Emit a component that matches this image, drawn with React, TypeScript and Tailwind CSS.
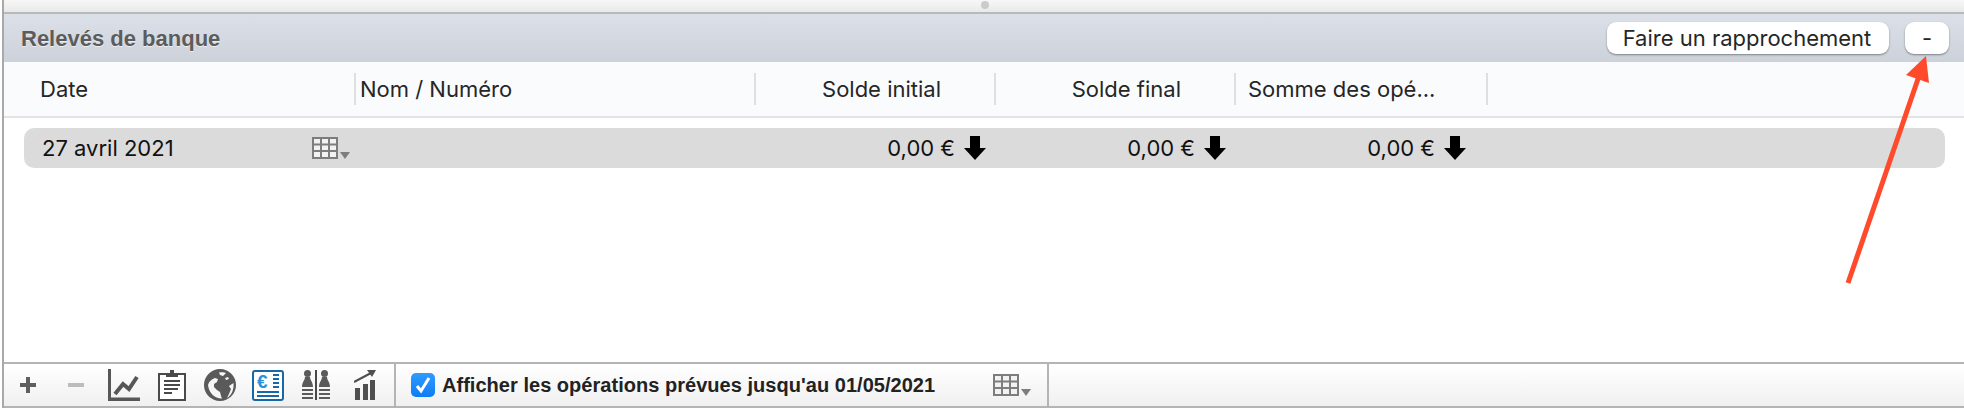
const sans = "font-['Inter','Liberation_Sans',sans-serif]"

function GridIcon () {
  return (
    <svg width="38" height="22" viewBox="0 0 38 22" className="shrink-0">
      <rect x="1" y="1" width="24" height="20" fill="#f2f2f2" stroke="#7d7d7d" strokeWidth="2" />
      <path d="M9 1v20M17 1v20M1 7.500h24M1 14h24" stroke="#7d7d7d" strokeWidth="2" fill="none" />
      <path d="M28 15h10l-5 7z" fill="#7d7d7d" />
    </svg>
  )
}

function DownArrow () {
  return (
    <svg width="22" height="24" viewBox="0 0 22 24" className="shrink-0">
      <path d="M6 0h10v12h6L11 24 0 12h6z" fill="#000" />
    </svg>
  )
}

function ChartIcon () {
  return (
    <svg width="32" height="32" viewBox="0 0 32 32" className="shrink-0">
      <path d="M0 0h3v28.500h29V32H0z" fill="#575757" />
      <path d="M7 25l8-10 6 5 8-12" stroke="#575757" strokeWidth="4" fill="none" />
    </svg>
  )
}

function ClipboardIcon () {
  return (
    <svg width="28" height="32" viewBox="0 0 28 32" className="shrink-0">
      <path d="M8 5H1v26h26V5h-7" stroke="#4a4a4a" strokeWidth="2" fill="#fff" />
      <path d="M8 8V4h4V1h4v3h4v4z" fill="#4a4a4a" />
      <path d="M6 12h16M6 16h16M6 20h14M6 24h8" stroke="#4a4a4a" strokeWidth="2" />
    </svg>
  )
}

function GlobeIcon () {
  return (
    <svg width="32" height="32" viewBox="0 0 32 32" className="shrink-0">
      <circle cx="16" cy="16" r="16" fill="#5a5a5a" />
      <path d="M4 16C5 12 8 10 11 9l3 1-1 3-3 2v3l3 3 3 2 1 4 1 2.500C12 30 5 25 4 16z" fill="#f6f6f6" />
      <path d="M23 29l2-4 2-5-2-3 4.500-3C30 20 28 26 23 29z" fill="#f6f6f6" />
      <path d="M15 3.500c3-.5 6 0 7 .5l-3 3-3-1zM21 9l3-1 1 2-3 1z" fill="#f6f6f6" />
    </svg>
  )
}

function EuroIcon () {
  return (
    <div className="flex h-[31px] w-[32px] shrink-0 flex-col rounded-[3px] border-2 border-[#1668a8] bg-white px-[3px] pt-[2px]">
      <div className="flex h-[15px] items-center gap-[2px]">
        <span className="w-[14px] font-['Liberation_Sans',sans-serif] text-[19px] leading-none font-bold text-[#2b90d9]">€</span>
        <div className="flex flex-1 flex-col gap-[2px]">
          <div className="h-[2px] bg-[#1668a8]" />
          <div className="h-[2px] bg-[#1668a8]" />
          <div className="h-[2px] bg-[#1668a8]" />
          <div className="h-[2px] bg-[#1668a8]" />
        </div>
      </div>
      <div className="mt-[2px] flex flex-col gap-[2px]">
        <div className="h-[2px] bg-[#1668a8]" />
        <div className="h-[2px] bg-[#1668a8]" />
      </div>
    </div>
  )
}

function PeopleIcon () {
  return (
    <svg width="28" height="30" viewBox="0 0 28 30" className="shrink-0">
      <path d="M14 0v30" stroke="#4a4a4a" strokeWidth="2" />
      <circle cx="5.500" cy="3.500" r="3.500" fill="#5a5a5a" />
      <circle cx="22.500" cy="3.500" r="3.500" fill="#5a5a5a" />
      <path d="M0 17c0-5 3-7 3-10h5c0 3 3 5 3 10zM17 17c0-5 3-7 3-10h5c0 3 3 5 3 10z" fill="#5a5a5a" />
      <path d="M0 20h11M0 24h11M0 28h11M17 20h11M17 24h11M17 28h11" stroke="#5a5a5a" strokeWidth="2" />
    </svg>
  )
}

function BarsIcon () {
  return (
    <svg width="22" height="30" viewBox="0 0 22 30" className="shrink-0">
      <path d="M1 18h5v12H1zM9 14h5v16H9zM16 10h5v20h-5z" fill="#4f4f4f" />
      <path d="M0 12L17 3" stroke="#4f4f4f" strokeWidth="2" />
      <path d="M13 0h9l-4 7z" fill="#4f4f4f" />
    </svg>
  )
}

const headers = [
  { label: 'Solde initial', cls: 'w-[240px] justify-end pr-[53px]' },
  { label: 'Solde final', cls: 'w-[240px] justify-end pr-[53px]' },
  { label: 'Somme des opé...', cls: 'w-[252px] pl-[12px]' },
]

export default function App () {
  return (
    <div className={`relative flex h-[408px] w-[1964px] flex-col overflow-hidden bg-white pl-[2px] ${sans}`}>
      <div className="flex flex-1 flex-col border-l-2 border-[#a9a9a9]">
        {/* split handle */}
        <div className="flex h-[14px] shrink-0 justify-center border-b-2 border-[#b9b9b6] bg-gradient-to-b from-[#f7f7f7] to-[#e9e9e9]">
          <div className="mt-[1px] ml-[2px] size-[8px] rounded-full bg-[#cbcbcb]" />
        </div>

        <div className="flex h-[48px] shrink-0 items-center justify-between bg-gradient-to-b from-[#dce1e9] to-[#cdd2da] pr-[15px] pl-[17px]">
          <span className="font-['Liberation_Sans',sans-serif] text-[22px] font-bold text-[#5c5c5c] [text-shadow:0_1px_0_rgba(255,255,255,0.6)]">Relevés de banque</span>
          <div className="flex gap-4">
            <button className="flex h-[32px] w-[282px] items-center justify-center rounded-[9px] bg-white pr-[2px] text-[22px] text-[#262626] shadow-[0_1px_2px_rgba(0,0,0,0.4)]">Faire un rapprochement</button>
            <button className="flex h-[32px] w-[44px] items-center justify-center rounded-[9px] bg-white text-[22px] text-[#262626] shadow-[0_1px_2px_rgba(0,0,0,0.4)]">-</button>
          </div>
        </div>

        <div className="flex h-[56px] shrink-0 items-center border-b-2 border-[#e3e3e5] bg-[#fafbfd] text-[22px] text-[#262626]">
          <div className="flex h-[32px] w-[352px] items-center border-r-2 border-[#dfdfdf] pl-[36px]">Date</div>
          <div className="flex h-[32px] w-[400px] items-center border-r-2 border-[#dfdfdf] pl-[4px]">Nom / Numéro</div>
          {headers.map((h) => (
            <div key={h.label} className={`flex h-[32px] items-center border-r-2 border-[#dfdfdf] ${h.cls}`}>{h.label}</div>
          ))}
        </div>

        <div className="mt-[10px] ml-[20px] flex h-[40px] w-[1921px] shrink-0 items-center rounded-[10px] bg-[#dbdbdb] text-[22px] text-[#111]">
          <div className="flex w-[332px] items-center justify-between pr-[6px] pl-[18px]">
            <span>27 avril 2021</span>
            <GridIcon />
          </div>
          <div className="w-[399px]" />
          {[0, 1, 2].map((i) => (
            <div key={i} className="flex w-[240px] items-center justify-end gap-[9px] pr-[9px]">
              <span>0,00 €</span>
              <DownArrow />
            </div>
          ))}
        </div>

        <div className="flex-1" />

        <div className="flex h-[46px] shrink-0 border-y-2 border-[#b4b4b4] bg-gradient-to-b from-white to-[#f0f0f0]">
          <div className="flex w-[392px] items-center border-r-2 border-[#b4b4b4] pl-[16px]">
            <svg width="16" height="16" viewBox="0 0 16 16" className="shrink-0">
              <path d="M6 0h4v6h6v4h-6v6H6v-6H0V6h6z" fill="#5f5f5f" />
            </svg>
            <div className="ml-[32px] h-[4px] w-[16px] shrink-0 bg-[#bcbcbc]" />
            <div className="ml-[24px]"><ChartIcon /></div>
            <div className="ml-[18px]"><ClipboardIcon /></div>
            <div className="ml-[18px]"><GlobeIcon /></div>
            <div className="ml-[16px]"><EuroIcon /></div>
            <div className="ml-[18px]"><PeopleIcon /></div>
            <div className="ml-[24px]"><BarsIcon /></div>
          </div>
          <div className="flex w-[653px] items-center border-r-2 border-[#b4b4b4] pl-[15px]">
            <div className="flex size-[24px] shrink-0 items-center justify-center rounded-[5px] bg-gradient-to-b from-[#2f9bff] to-[#0a7cf5]">
              <svg width="16" height="18" viewBox="0 0 16 18">
                <path d="M2 10l4 5 8-13" stroke="#fff" strokeWidth="3" fill="none" />
              </svg>
            </div>
            <span className="ml-[7px] font-['Liberation_Sans',sans-serif] text-[20px] font-bold tracking-[0.03px] text-[#222]">Afficher les opérations prévues jusqu'au 01/05/2021</span>
            <div className="mr-[16px] ml-auto"><GridIcon /></div>
          </div>
        </div>
      </div>

      {/* annotation arrow over the page */}
      <svg className="pointer-events-none absolute top-0 left-0" width="1964" height="408" viewBox="0 0 1964 408">
        <path d="M1848 283L1919 76" stroke="#ff4a2c" strokeWidth="5" fill="none" />
        <path d="M1926 56L1906 75L1929 83z" fill="#ff4a2c" />
      </svg>
    </div>
  )
}
